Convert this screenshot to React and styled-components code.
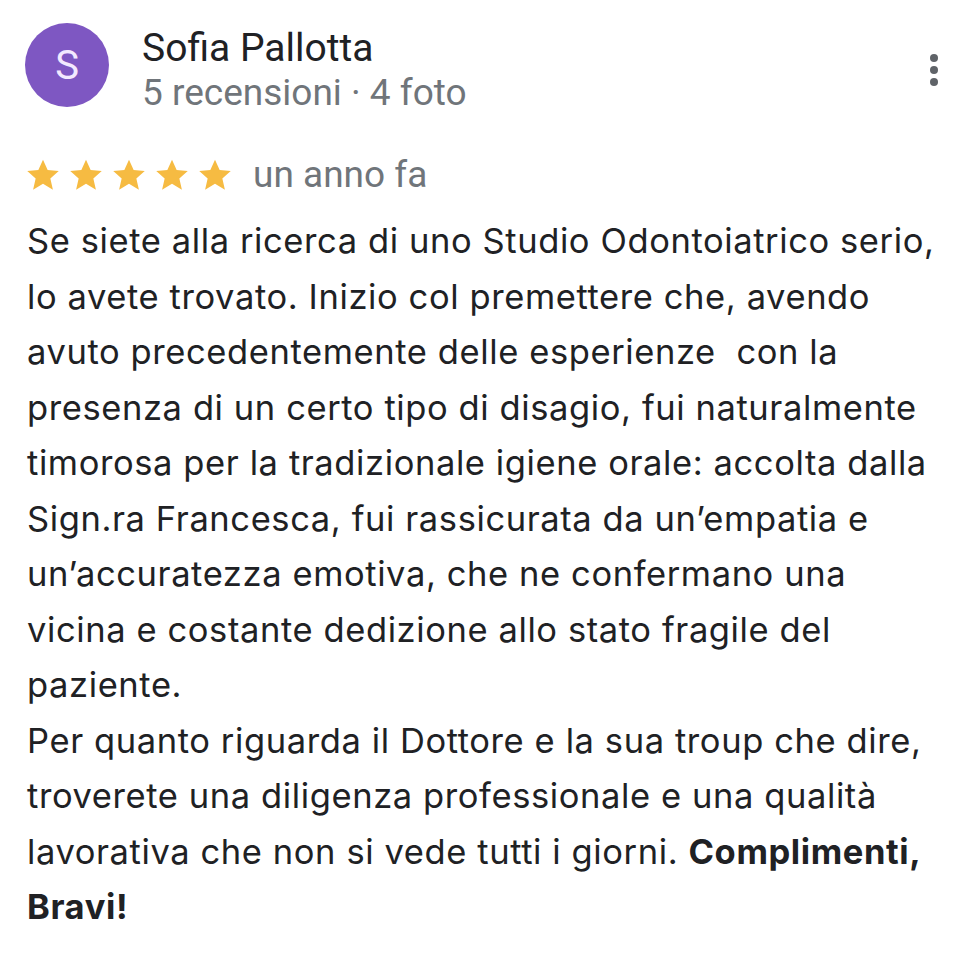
import React from "react";
import styled, { createGlobalStyle } from "styled-components";

const Global = createGlobalStyle`
  html, body { margin: 0; padding: 0; background: #fff; }
  body { font-family: Roboto, "Noto Sans", Arial, sans-serif; }
`;

const Card = styled.div`
  width: 970px;
  box-sizing: border-box;
  padding: 25px 32px 0 25px;
`;

const Header = styled.div`
  display: flex;
  align-items: flex-start;
  gap: 33px;
`;

const Avatar = styled.div`
  width: 84px;
  height: 84px;
  margin-top: -2px;
  border-radius: 50%;
  background: #7e57c2;
  color: #f3e9ff;
  display: flex;
  align-items: center;
  justify-content: center;
  font-size: 40px;
  flex-shrink: 0;
`;

const Who = styled.div`
  flex: 1;
  display: flex;
  flex-direction: column;
`;

const Name = styled.div`
  font-size: 39px;
  color: #202124;
  line-height: 46px;
`;

const Sub = styled.div`
  font-size: 37px;
  color: #70757a;
  line-height: 44px;
`;

const Menu = styled.div`
  display: flex;
  flex-direction: column;
  gap: 4px;
  padding-top: 29px;
`;

const Dot = styled.span`
  width: 8px;
  height: 8px;
  border-radius: 50%;
  background: #5f6368;
`;

const RatingRow = styled.div`
  display: flex;
  align-items: center;
  margin-top: 38px;
  gap: 20px;
`;

const Stars = styled.div`
  display: flex;
  gap: 7px;
`;

const When = styled.span`
  font-size: 37px;
  line-height: 44px;
  color: #70757a;
`;

const Body = styled.p`
  margin: 16px 0 0 2px;
  font-family: Inter, Roboto, sans-serif;
  font-size: 34.5px;
  line-height: 55.5px;
  color: #202124;
  letter-spacing: 0.6px;
`;

const Strong = styled.b`
  font-weight: 700;
`;

const Star = () => (
  <svg width="36" height="36" viewBox="0 0 24 24">
    <path
      fill="#f6bb42"
      d="M12 1.8l3.1 6.9 7.4.7-5.6 5 1.7 7.4L12 17.9l-6.6 3.9 1.7-7.4-5.6-5 7.4-.7z"
    />
  </svg>
);

export default function App() {
  return (
    <>
      <Global />
      <Card>
        <Header>
          <Avatar>S</Avatar>
          <Who>
            <Name>Sofia Pallotta</Name>
            <Sub>5 recensioni · 4 foto</Sub>
          </Who>
          <Menu>
            <Dot />
            <Dot />
            <Dot />
          </Menu>
        </Header>
        <RatingRow>
          <Stars>
            <Star />
            <Star />
            <Star />
            <Star />
            <Star />
          </Stars>
          <When>un anno fa</When>
        </RatingRow>
        <Body>
          Se siete alla ricerca di uno Studio Odontoiatrico serio,
          <br />
          lo avete trovato. Inizio col premettere che, avendo
          <br />
          avuto precedentemente delle esperienze&nbsp; con la
          <br />
          presenza di un certo tipo di disagio, fui naturalmente
          <br />
          timorosa per la tradizionale igiene orale: accolta dalla
          <br />
          Sign.ra Francesca, fui rassicurata da un’empatia e
          <br />
          un’accuratezza emotiva, che ne confermano una
          <br />
          vicina e costante dedizione allo stato fragile del
          <br />
          paziente.
          <br />
          Per quanto riguarda il Dottore e la sua troup che dire,
          <br />
          troverete una diligenza professionale e una qualità
          <br />
          lavorativa che non si vede tutti i giorni. <Strong>Complimenti,</Strong>
          <br />
          <Strong>Bravi!</Strong>
        </Body>
      </Card>
    </>
  );
}
